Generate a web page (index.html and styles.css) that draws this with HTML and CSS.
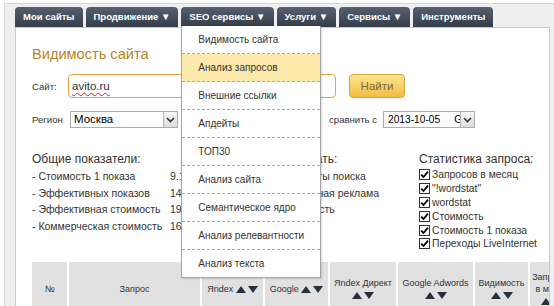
FILE: index.html
```html
<!DOCTYPE html>
<html lang="ru">
<head>
<meta charset="utf-8">
<title>Видимость сайта</title>
<link rel="stylesheet" href="styles.css">
</head>
<body>
<div class="frame">
  <nav class="tabs">
    <div class="tab">Мои сайты</div>
    <div class="tab">Продвижение ▼</div>
    <div class="tab">SEO сервисы ▼
      <ul class="menu">
        <li>Видимость сайта</li>
        <li class="active">Анализ запросов</li>
        <li>Внешние ссылки</li>
        <li>Апдейты</li>
        <li>ТОП30</li>
        <li>Анализ сайта</li>
        <li>Семантическое ядро</li>
        <li>Анализ релевантности</li>
        <li>Анализ текста</li>
      </ul>
    </div>
    <div class="tab">Услуги ▼</div>
    <div class="tab">Сервисы ▼</div>
    <div class="tab">Инструменты</div>
  </nav>
  <main class="panel">
    <h1 class="title">Видимость сайта</h1>
    <div class="site-row">
      <span class="label label-site">Сайт:</span>
      <div class="input"><span class="misspelled">avito.ru</span></div>
      <button class="btn">Найти</button>
    </div>
    <div class="region-row">
      <span class="label label-region">Регион</span>
      <div class="select select-region"><span class="select-text">Москва</span><span class="select-arrow"><svg width="9" height="6" viewBox="0 0 9 6"><path d="M1 1 L4.5 4.5 L8 1" fill="none" stroke="#333" stroke-width="1.6"/></svg></span></div>
      <span class="label label-compare">сравнить с</span>
      <div class="select select-date"><span class="select-text date-text">2013-10-05<span class="date-extra">Google</span></span><span class="select-arrow"><svg width="9" height="6" viewBox="0 0 9 6"><path d="M1 1 L4.5 4.5 L8 1" fill="none" stroke="#333" stroke-width="1.6"/></svg></span></div>
    </div>
    <div class="stats">
      <div class="col col-general">
        <div class="col-title">Общие показатели:</div>
        <div class="stat-row"><span class="stat-name">- Стоимость 1 показа</span><span class="stat-val">9.12</span></div>
        <div class="stat-row"><span class="stat-name">- Эффективных показов</span><span class="stat-val">14 520</span></div>
        <div class="stat-row"><span class="stat-name">- Эффективная стоимость</span><span class="stat-val">19 840</span></div>
        <div class="stat-row"><span class="stat-name">- Коммерческая стоимость</span><span class="stat-val">16 300</span></div>
      </div>
      <div class="col col-show">
        <div class="col-title">Показывать:</div>
        <div class="stat-row">- Результаты поиска</div>
        <div class="stat-row">- Контекстная реклама</div>
        <div class="stat-row">- Частотность</div>
      </div>
      <div class="col col-query">
        <div class="col-title">Статистика запроса:</div>
        <label class="check"><span class="cb"><svg width="9" height="9" viewBox="0 0 9 9"><path d="M1.2 4.6 L3.5 7 L8 1.6" fill="none" stroke="#000" stroke-width="1.8"/></svg></span>Запросов в месяц</label>
        <label class="check"><span class="cb"><svg width="9" height="9" viewBox="0 0 9 9"><path d="M1.2 4.6 L3.5 7 L8 1.6" fill="none" stroke="#000" stroke-width="1.8"/></svg></span>"!wordstat"</label>
        <label class="check"><span class="cb"><svg width="9" height="9" viewBox="0 0 9 9"><path d="M1.2 4.6 L3.5 7 L8 1.6" fill="none" stroke="#000" stroke-width="1.8"/></svg></span>wordstat</label>
        <label class="check"><span class="cb"><svg width="9" height="9" viewBox="0 0 9 9"><path d="M1.2 4.6 L3.5 7 L8 1.6" fill="none" stroke="#000" stroke-width="1.8"/></svg></span>Стоимость</label>
        <label class="check"><span class="cb"><svg width="9" height="9" viewBox="0 0 9 9"><path d="M1.2 4.6 L3.5 7 L8 1.6" fill="none" stroke="#000" stroke-width="1.8"/></svg></span>Стоимость 1 показа</label>
        <label class="check"><span class="cb"><svg width="9" height="9" viewBox="0 0 9 9"><path d="M1.2 4.6 L3.5 7 L8 1.6" fill="none" stroke="#000" stroke-width="1.8"/></svg></span>Переходы LiveInternet</label>
      </div>
    </div>
    <table class="data">
      <colgroup>
        <col class="c-num"><col class="c-query"><col class="c-ya"><col class="c-go"><col class="c-yd"><col class="c-ga"><col class="c-vis"><col class="c-req">
      </colgroup>
      <thead>
        <tr>
          <th>№</th>
          <th>Запрос</th>
          <th>Яndex <span class="sort"><svg width="10" height="7" viewBox="0 0 10 7"><path d="M0 7 L5 0 L10 7 Z" fill="#27303f"/></svg><svg width="10" height="7" viewBox="0 0 10 7"><path d="M0 0 L10 0 L5 7 Z" fill="#27303f"/></svg></span></th>
          <th>Google <span class="sort"><svg width="10" height="7" viewBox="0 0 10 7"><path d="M0 7 L5 0 L10 7 Z" fill="#27303f"/></svg><svg width="10" height="7" viewBox="0 0 10 7"><path d="M0 0 L10 0 L5 7 Z" fill="#27303f"/></svg></span></th>
          <th>Яndex Директ <span class="sort"><svg width="10" height="7" viewBox="0 0 10 7"><path d="M0 7 L5 0 L10 7 Z" fill="#27303f"/></svg><svg width="10" height="7" viewBox="0 0 10 7"><path d="M0 0 L10 0 L5 7 Z" fill="#27303f"/></svg></span></th>
          <th>Google Adwords <span class="sort"><svg width="10" height="7" viewBox="0 0 10 7"><path d="M0 7 L5 0 L10 7 Z" fill="#27303f"/></svg><svg width="10" height="7" viewBox="0 0 10 7"><path d="M0 0 L10 0 L5 7 Z" fill="#27303f"/></svg></span></th>
          <th>Видимость <span class="sort"><svg width="10" height="7" viewBox="0 0 10 7"><path d="M0 7 L5 0 L10 7 Z" fill="#27303f"/></svg><svg width="10" height="7" viewBox="0 0 10 7"><path d="M0 0 L10 0 L5 7 Z" fill="#27303f"/></svg></span></th>
          <th>Запросов в месяц <span class="sort"><svg width="10" height="7" viewBox="0 0 10 7"><path d="M0 7 L5 0 L10 7 Z" fill="#27303f"/></svg><svg width="10" height="7" viewBox="0 0 10 7"><path d="M0 0 L10 0 L5 7 Z" fill="#27303f"/></svg></span></th>
        </tr>
      </thead>
    </table>
  </main>
</div>
</body>
</html>
```
FILE: styles.css
```css
* { box-sizing: border-box; }
html, body { margin: 0; padding: 0; }
body {
  background: #ffffff;
  font-family: "Liberation Sans", Arial, sans-serif;
  color: #333;
  overflow: hidden;
}
.frame {
  margin: 3px 0 0 4px;
  height: 303px;
  border-top: 1px solid #d6d6d6;
  border-left: 1px solid #d6d6d6;
  background: #efefef;
  padding: 3px 0 0 10px;
  overflow: hidden;
}
.tabs {
  display: flex;
  gap: 3px;
  height: 20px;
}
.tab {
  position: relative;
  height: 20px;
  padding: 0 8px;
  line-height: 20px;
  font-size: 9.5px;
  font-weight: bold;
  color: #fff;
  white-space: nowrap;
  background: linear-gradient(#56606e, #353d4a);
  border-radius: 4px 4px 0 0;
}
.menu {
  position: absolute;
  left: 0;
  top: 19px;
  width: 140px;
  margin: 0;
  padding: 0;
  list-style: none;
  background: #fff;
  border: 1px solid #a3a3a3;
  border-top: none;
  box-shadow: 1px 1px 2px rgba(0,0,0,0.15);
  z-index: 10;
}
.menu li {
  height: 28px;
  line-height: 27px;
  padding-left: 16px;
  font-size: 10px;
  font-weight: normal;
  color: #333;
  border-bottom: 1px dashed #a8a8a8;
}
.menu li:last-child { border-bottom: none; height: 27px; }
.menu li.active { background: #fde9a9; }

.panel {
  display: block;
  width: 535px;
  height: 300px;
  background: #fff;
  border: 1px solid #cacaca;
  padding: 17px 16px 0 16px;
  overflow: hidden;
}
.title {
  margin: 0;
  font-size: 14.6px;
  line-height: 18px;
  font-weight: normal;
  color: #b8841f;
}
.label { font-size: 9.6px; color: #333; }
.site-row {
  display: flex;
  align-items: center;
  margin-top: 11px;
  height: 24px;
}
.label-site { width: 36px; }
.input {
  width: 268px;
  height: 24px;
  border: 1px solid #e2a446;
  border-radius: 4px;
  padding-left: 3px;
  font-size: 11.5px;
  line-height: 22px;
  color: #333;
  background: #fff;
}
.misspelled {
  text-decoration: underline wavy #e02020;
  text-decoration-thickness: 1px;
  text-underline-offset: 2px;
}
.btn {
  margin-left: 13px;
  width: 56px;
  height: 24px;
  border: 1px solid #dca53c;
  border-radius: 4px;
  background: linear-gradient(#fde48d, #f3bd44);
  font-family: inherit;
  font-size: 11.5px;
  color: #7c6a40;
  padding: 0;
  line-height: 22px;
}
.region-row {
  display: flex;
  align-items: center;
  margin-top: 13px;
  height: 17px;
}
.label-region { width: 38px; }
.select {
  display: flex;
  height: 17px;
  border: 1px solid #a7adb5;
  background: #fff;
  overflow: hidden;
}
.select-text {
  flex: 1;
  padding-left: 3px;
  white-space: nowrap;
  overflow: hidden;
  color: #000;
}
.select-region { width: 108px; }
.select-region .select-text { font-size: 11.5px; line-height: 15px; }
.select-arrow {
  width: 14px;
  height: 15px;
  border-left: 1px solid #b5b5b5;
  background: linear-gradient(#f6f6f6, #dcdcdc);
  display: flex;
  align-items: center;
  justify-content: center;
}
.label-compare { margin-left: 151px; width: 54px; }
.select-date { width: 92px; }
.date-text { font-size: 10.2px; line-height: 15px; padding-left: 4px; }
.date-extra { margin-left: 14px; }

.stats {
  display: grid;
  grid-template-columns: 236px 151px auto;
  margin-top: 23px;
}
.col-title {
  font-size: 12px;
  line-height: 17px;
  color: #333;
  white-space: nowrap;
}
.stat-row {
  display: flex;
  font-size: 10.5px;
  line-height: 16.5px;
  white-space: nowrap;
  color: #333;
}
.stat-name { width: 138px; }
.check {
  display: flex;
  align-items: center;
  height: 13.8px;
  font-size: 10.3px;
  white-space: nowrap;
  color: #333;
}
.cb {
  display: inline-flex;
  align-items: center;
  justify-content: center;
  width: 11px;
  height: 11px;
  border: 1px solid #333;
  background: #fff;
  margin-right: 2px;
}

.data {
  margin-top: 11px;
  table-layout: fixed;
  width: 543px;
  border-collapse: collapse;
}
.c-num { width: 36px; }
.c-query { width: 133px; }
.c-ya { width: 63px; }
.c-go { width: 65px; }
.c-yd { width: 68px; }
.c-ga { width: 77px; }
.c-vis { width: 55px; }
.c-req { width: 46px; }
.data th {
  background: #e1e1e1;
  border-right: 2px solid #fff;
  font-size: 9px;
  font-weight: normal;
  color: #333;
  line-height: 12px;
  padding: 8px 2px;
  text-align: center;
  vertical-align: middle;
  height: 54px;
  overflow: hidden;
}
.sort {
  display: inline-flex;
  gap: 2px;
  white-space: nowrap;
  vertical-align: -1px;
}
```
